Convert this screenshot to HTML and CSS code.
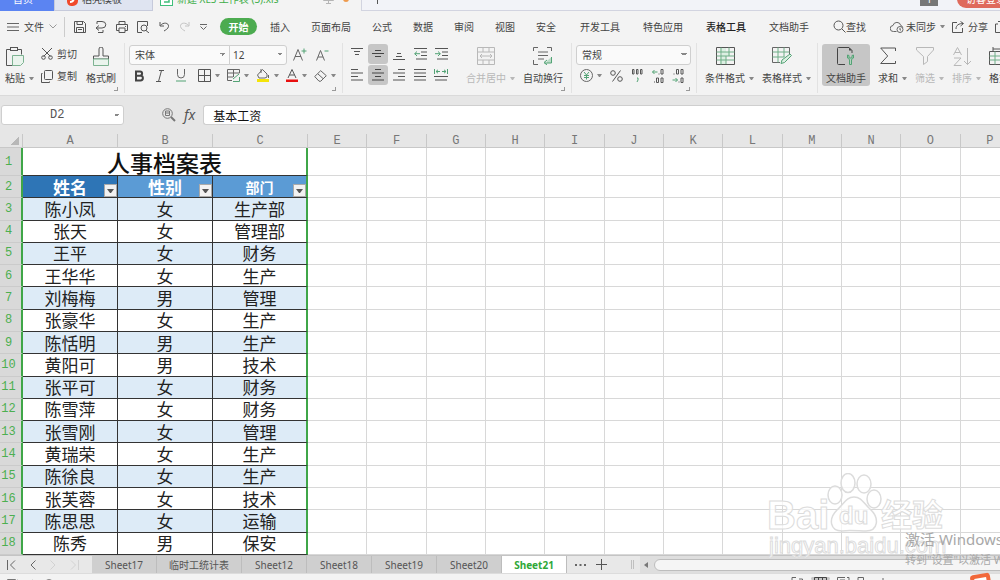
FILE: index.html
```html
<!DOCTYPE html>
<html lang="zh-CN">
<head>
    <meta charset="UTF-8">
    <title>新建 XLS 工作表 (3).xls</title>
    <meta name="viewport" content="width=device-width, initial-scale=1.0">
    <link rel="stylesheet" href="styles.css">
</head>
<body>
    <header class="titlebar">
        <button class="doc-tab home">首页</button>
        <button class="doc-tab docer">
            <svg width="12" height="14" viewBox="0 0 12 14"><path d="M1 1h6a5 5 0 0 1 5 5v3a5 5 0 0 1-5 5H5a5 5 0 0 1-4-5z" fill="#f0492c"/><path d="M4 10c3 0 4-2 4-5" stroke="#fff" stroke-width="2" fill="none"/></svg>
            稻壳模板
        </button>
        <button class="doc-tab current">
            <svg width="13" height="14" viewBox="0 0 13 14"><rect x=".5" y=".5" width="12" height="13" fill="#fff" stroke="#3fbf7a"/><path d="M9 4H4v3h5v3H4" stroke="#3fbf7a" stroke-width="1.5" fill="none"/></svg>
            <span>新建 XLS 工作表 (3).xls</span>
            <svg class="monitor" width="11" height="10" viewBox="0 0 11 10"><path d="M.5.5h10v6H.5zM5.500 7v2.500M3 9.500h5" stroke="#b5b5b5" fill="none"/></svg>
            <i class="unsaved"></i>
        </button>
        <button class="new-tab" aria-label="新建标签"><svg width="9" height="9" viewBox="0 0 9 9"><path d="M4.500 0v9M0 4.500h9" stroke="#555"/></svg></button>
        <span class="badge">1</span>
        <button class="login">访客登录</button>
    </header>

    <nav class="menubar">
        <button class="file-menu">
            <svg width="12" height="10" viewBox="0 0 12 10"><path d="M0 1.500h12M0 5h12M0 8.500h12" stroke="#666"/></svg>
            文件
            <svg width="8" height="5" viewBox="0 0 8 5"><path d="M.5.5 4 4 7.500.5" stroke="#999" fill="none"/></svg>
        </button>
        <div class="quick">
            <button aria-label="保存"><svg width="12" height="12" viewBox="0 0 12 12"><path d="M.5.5h9l2 2v9H.5zM3 .5v3h5.500v-3M2.500 11.500v-5h7v5M4 8.500h4" stroke="#555" fill="none"/></svg></button>
            <button aria-label="输出"><svg width="12" height="12" viewBox="0 0 12 12"><path d="M2 3V.5h5a3.500 3 0 0 1 0 6.500H1M4 4.500 1 7l3 2.500M3 11.500h5V9" stroke="#555" fill="none"/></svg></button>
            <button aria-label="打印"><svg width="12" height="12" viewBox="0 0 12 12"><path d="M3 3.500v-3h6v3M3 9.500H.5v-6h11v6H9M3 7h6v4.500H3zM9 5.500h1" stroke="#555" fill="none"/></svg></button>
            <button aria-label="打印预览"><svg width="13" height="12" viewBox="0 0 13 12"><path d="M5 11.500H.5V.5h10V5M9 9.500l3 2.500" stroke="#555" fill="none"/><circle cx="7" cy="7" r="3" stroke="#555" fill="none"/></svg></button>
            <button aria-label="撤销"><svg width="11" height="11" viewBox="0 0 11 11"><path d="M1 1v4h4M1.500 4.500C4 1 10 1.500 9.500 5.500 9 8 6.500 9 5 10" stroke="#555" fill="none"/></svg></button>
            <button aria-label="恢复"><svg width="11" height="11" viewBox="0 0 11 11"><path d="M10 1v4H6M9.500 4.500C7 1 1 1.500 1.500 5.500 2 8 4.500 9 6 10" stroke="#c4c4c4" fill="none"/></svg></button>
            <button aria-label="更多"><svg width="9" height="6" viewBox="0 0 9 6"><path d="M1 .5h7M1.500 2.500l3 3 3-3" stroke="#666" fill="none"/></svg></button>
        </div>
        <button class="active">开始</button>
        <div class="menus">
            <button>插入</button>
            <button>页面布局</button>
            <button>公式</button>
            <button>数据</button>
            <button>审阅</button>
            <button>视图</button>
            <button>安全</button>
        </div>
        <div class="menus wide">
            <button>开发工具</button>
            <button>特色应用</button>
            <button class="context">表格工具</button>
            <button>文档助手</button>
        </div>
        <button class="find"><svg width="13" height="13" viewBox="0 0 13 13"><circle cx="5.500" cy="5.500" r="4.500" stroke="#555" fill="none"/><path d="m9 9 3.500 3.500" stroke="#555"/></svg>查找</button>
        <button class="sync"><svg width="14" height="12" viewBox="0 0 14 12"><path d="M6.500 10.500H3.500a3 3 0 0 1-.5-6 4 4 0 0 1 7.800 0 3 3 0 0 1 2 2" stroke="#666" fill="none"/><circle cx="10" cy="8.500" r="3" stroke="#666" fill="none"/><path d="M10 7v2h1" stroke="#666" fill="none"/></svg>未同步<i class="caret"></i></button>
        <button class="share"><svg width="13" height="12" viewBox="0 0 13 12"><path d="M5 1.500H.5v10h10V7M4 8c0-4 3-5.500 7-5.500M8.500.5l3 2-3 2.500" stroke="#555" fill="none"/></svg>分享</button>
        <button class="share" aria-label="批注"><svg width="12" height="12" viewBox="0 0 12 12"><path d="M3 3H.5v8.500h10V8M3 .5h5M5.500 0v7" stroke="#555" fill="none"/></svg></button>
    </nav>

    <section class="ribbon">
        <div class="group clipboard">
            <button class="big"><svg width="18" height="20" viewBox="0 0 18 20"><path d="M4.500 2.500h-4v16h7M11.500 2.500h4v5" stroke="#555" fill="none"/><rect x="4.500" y=".5" width="7" height="3" stroke="#555" fill="none"/><path d="M6.500 8.500h11v7l-3 3h-8z" stroke="#7db392" fill="#eaf4ed"/></svg><span>粘贴<i class="caret"></i></span></button>
            <div class="rows">
                <button><svg width="12" height="12" viewBox="0 0 12 12"><path d="m1 0 8.500 8.500M11 0 2.500 8.500" stroke="#555"/><circle cx="2.500" cy="9.500" r="1.800" stroke="#555" fill="none"/><circle cx="9.500" cy="9.500" r="1.800" stroke="#555" fill="none"/></svg>剪切</button>
                <button><svg width="12" height="13" viewBox="0 0 12 13"><rect x="3.500" y=".5" width="8" height="9" rx="1" stroke="#555" fill="none"/><path d="M1.500 3.500h-1v9h8v-1" stroke="#555" fill="none"/></svg>复制</button>
            </div>
            <button class="big"><svg width="18" height="20" viewBox="0 0 18 20"><path d="M7 9V2a2 2 0 0 1 4 0v7h5.500v3h-15V9z" stroke="#555" fill="none"/><path d="M1.500 12h15v6.500h-15z" stroke="#7db392" fill="#eaf4ed"/></svg><span>格式刷</span></button>
            <i class="launcher"></i>
        </div>
        <div class="group font">
            <div class="line">
                <div class="joined">
                    <select class="combo font-name" aria-label="字体"><option>宋体</option></select>
                    <select class="combo font-size" aria-label="字号"><option>12</option></select>
                </div>
                <button aria-label="增大字号"><svg width="14" height="13" viewBox="0 0 14 13"><path d="m.5 12.500 4.500-11 4.500 11M2 8.500h6" stroke="#666" fill="none"/><path d="M11 .5v5M8.500 3h5" stroke="#53a375"/></svg></button>
                <button aria-label="减小字号"><svg width="13" height="12" viewBox="0 0 13 12"><path d="m.5 11.500 4-10 4 10M2 8h5" stroke="#666" fill="none"/><path d="M8.500 2h4" stroke="#53a375"/></svg></button>
            </div>
            <div class="line tools">
                <button aria-label="加粗"><svg width="10" height="12" viewBox="0 0 10 12"><path d="M2 1.500h4a2 2 0 0 1 0 4.200H2zm0 4.200h4.500a2.300 2.300 0 0 1 0 4.800H2z" stroke="#444" stroke-width="2" fill="none"/></svg></button>
                <button aria-label="倾斜"><svg width="8" height="12" viewBox="0 0 8 12"><path d="M3 .5h5M0 11.500h5M5.500.5l-3 11" stroke="#555"/></svg></button>
                <button aria-label="下划线"><svg width="10" height="13" viewBox="0 0 10 13"><path d="M1.500 0v5.500a3.500 3.500 0 0 0 7 0V0" stroke="#666" fill="none"/><path d="M0 12h10" stroke="#53a375"/></svg></button>
                <button aria-label="边框"><svg width="13" height="13" viewBox="0 0 13 13"><path d="M.5.5h12v12H.5zM6.500.5v12M.5 6.500h12" stroke="#555" fill="none"/></svg><i class="caret"></i></button>
                <button aria-label="单元格样式"><svg width="13" height="13" viewBox="0 0 13 13"><path d="M12.500 4V.5H.5v11H5M.5 4h12M.5 8H6M6.500.5V8" stroke="#666" fill="none"/><path d="m6 10 6-5M6 12.500h6.500V8" stroke="#53a375" fill="none"/></svg><i class="caret"></i></button>
                <button aria-label="填充颜色"><svg width="14" height="13" viewBox="0 0 14 13"><path d="M6.500.5 11 5v3L9 9H3L1.500 6z" stroke="#666" fill="none"/><path d="M5 0v4" stroke="#666"/><path d="M12.500 6v3" stroke="#666"/><path d="M1 10h12v3H1z" fill="#f4e409"/></svg><i class="caret"></i></button>
                <button aria-label="字体颜色"><svg width="12" height="13" viewBox="0 0 12 13"><path d="M2 9 6 .5 10 9M3.500 6h5" stroke="#555" fill="none"/><path d="M0 10.500h12V13H0z" fill="#e81010"/></svg><i class="caret"></i></button>
                <button aria-label="清除"><svg width="13" height="12" viewBox="0 0 13 12"><path d="m.7 6.500 6-5.800 5.600 5-5.500 5.500H5zM4 4l5 4.500" stroke="#666" fill="none"/></svg><i class="caret"></i></button>
            </div>
            <i class="launcher"></i>
        </div>
        <div class="group align">
            <div class="align-grid">
                <button aria-label="顶端对齐"><svg width="12" height="12" viewBox="0 0 12 12"><path d="M0 .5h12M3 3.500h6M4 6.500h4" stroke="#555"/></svg></button>
                <button class="on" aria-label="垂直居中"><svg width="12" height="12" viewBox="0 0 12 12"><path d="M3 2.500h6M0 5.500h12M3 8.500h6" stroke="#444"/></svg></button>
                <button aria-label="底端对齐"><svg width="12" height="12" viewBox="0 0 12 12"><path d="M4 5.500h4M3 8.500h6M0 11.500h12" stroke="#555"/></svg></button>
                <button aria-label="减少缩进"><svg width="13" height="12" viewBox="0 0 13 12"><path d="M0 .5h13M7 4h6M7 7.500h6M2 11h11" stroke="#555"/><path d="M6 5.700H.7M3 3.500.7 5.700 3 8" stroke="#53a375" fill="none"/></svg></button>
                <button aria-label="增加缩进"><svg width="13" height="12" viewBox="0 0 13 12"><path d="M0 .5h13M7 4h6M7 7.500h6M2 11h11" stroke="#555"/><path d="M0 5.700h5.300M3 3.500l2.300 2.200L3 8" stroke="#53a375" fill="none"/></svg></button>
                <button aria-label="左对齐"><svg width="12" height="12" viewBox="0 0 12 12"><path d="M0 .5h7M0 4h12M0 7.500h7M0 11h12" stroke="#555"/></svg></button>
                <button class="on" aria-label="水平居中"><svg width="12" height="12" viewBox="0 0 12 12"><path d="M3 .5h6M0 4h12M3 7.500h6M0 11h12" stroke="#444"/></svg></button>
                <button aria-label="右对齐"><svg width="12" height="12" viewBox="0 0 12 12"><path d="M5 .5h7M0 4h12M5 7.500h7M0 11h12" stroke="#555"/></svg></button>
                <button aria-label="两端对齐"><svg width="12" height="12" viewBox="0 0 12 12"><path d="M0 .5h12M0 4h12M0 7.500h12M0 11h12" stroke="#555"/></svg></button>
                <button aria-label="分散对齐"><svg width="14" height="12" viewBox="0 0 14 12"><path d="M.5 0v5M13.500 0v5M6 2.500H2M4 .8 2 2.500l2 1.700M8 2.500h4M10 .8l2 1.700-2 1.700" stroke="#53a375" fill="none"/><path d="M0 7.500h14M1 11h12" stroke="#555"/></svg></button>
            </div>
            <button class="big off"><svg width="18" height="18" viewBox="0 0 18 18"><path d="M.5.5h17v17H.5zM.5 5h17M.5 13h17M6 .5V5M12 .5V5M6 13v4.500M12 13v4.500M3 9h12M5 7 3 9l2 2M13 7l2 2-2 2" stroke="#b8b8b8" fill="none"/></svg><span>合并居中<i class="caret"></i></span></button>
            <button class="big"><svg width="20" height="18" viewBox="0 0 20 18"><path d="M.5 4V.5H5M14 .5h4.500V4M.5 13v4.500H5M5 5h10M5 8.500h10M5 12h6" stroke="#666" fill="none"/><path d="M18.500 10v6h-7M14 13l-3 2.500 3 2.500" stroke="#53a375" fill="#bcdcc8"/></svg><span>自动换行</span></button>
            <i class="launcher"></i>
        </div>
        <div class="group number">
            <div class="line"><select class="combo format" aria-label="数字格式"><option>常规</option></select></div>
            <div class="line tools">
                <button aria-label="货币"><svg width="13" height="13" viewBox="0 0 13 13"><circle cx="6.500" cy="6.500" r="6" stroke="#666" fill="none"/><path d="m4 3 2.500 3L9 3M6.500 6v4.500M4 6.500h5M4 8.500h5" stroke="#53a375" fill="none"/></svg><i class="caret"></i></button>
                <button aria-label="百分比"><svg width="13" height="12" viewBox="0 0 13 12"><circle cx="3" cy="3" r="2.300" stroke="#555" fill="none"/><circle cx="10" cy="9" r="2.300" stroke="#555" fill="none"/><path d="m10.500.5-8 11" stroke="#555"/></svg></button>
                <button aria-label="千位分隔"><svg width="13" height="14" viewBox="0 0 13 14"><path d="M1.500.5h1.500v4.500H1.500zM5.500.5H7v4.500H5.500zM9.500.5H11v4.500H9.500z" stroke="#555" fill="none"/><path d="M6 9h1v2l-1 2" stroke="#53a375" fill="none"/></svg></button>
                <button aria-label="增加小数"><svg width="12" height="14" viewBox="0 0 12 14"><path d="M9 .5h2v4.500H9zM4.500 9h2v4.500h-2zM9 9h2v4.500H9zM2 13h1M6.500 5h1" stroke="#555" fill="none"/><path d="M5.500 3h-5M2.500 1l-2 2 2 2" stroke="#53a375" fill="none"/></svg></button>
                <button aria-label="减少小数"><svg width="12" height="14" viewBox="0 0 12 14"><path d="M4.500.5h2v4.500h-2zM9 .5h2v4.500H9zM9 9h2v4.500H9zM1.500 5h1M6.500 13h1" stroke="#555" fill="none"/><path d="M.5 11h5M3.500 9l2 2-2 2" stroke="#53a375" fill="none"/></svg></button>
            </div>
            <i class="launcher"></i>
        </div>
        <div class="group styles">
            <button class="big"><svg width="19" height="18" viewBox="0 0 19 18"><path d="M4 1h6v4H4zM6 5h8v4H6zM4 9h6v8H4z" fill="#dcefe2"/><path d="M.5.5h18v17H.5z" stroke="#555" fill="none"/><path d="M.5 5h18M.5 9h18M.5 13h18M5 .5v17M13 .5V9M10 9v8" stroke="#6fae87" fill="none"/></svg><span>条件格式<i class="caret"></i></span></button>
            <button class="big"><svg width="20" height="18" viewBox="0 0 20 18"><path d="M17.500 7V.5H.5v15H8" stroke="#666" fill="none"/><path d="M.5 5h17M.5 10h12M6 .5v15M12 .5V10" stroke="#6fae87" fill="none"/><path d="m18 7 1.500 1.500-7 7-3.500 1 1-3.500z" stroke="#53a375" fill="#dcefe2"/></svg><span>表格样式<i class="caret"></i></span></button>
        </div>
        <div class="group edit">
            <button class="big on"><svg width="18" height="18" viewBox="0 0 18 18"><path d="M8 17.500H1.500a1 1 0 0 1-1-1v-15a1 1 0 0 1 1-1H12l3 3V6" stroke="#444" fill="none"/><path d="M12 .5v3h3z" fill="#444"/><path d="M10.500 8v3l2 1.500v5h2v-5l2-1.500V8l-1.500.5V11h-3V8.500z" stroke="#53a375" fill="#b2d3be"/></svg><span>文档助手</span></button>
            <button class="big"><svg width="16" height="18" viewBox="0 0 16 18"><path d="M15.500 4V1H.7l7 8-7 7.500h14.800V14" stroke="#555" fill="none"/></svg><span>求和<i class="caret"></i></span></button>
            <button class="big off"><svg width="18" height="18" viewBox="0 0 18 18"><path d="M.5.5h17V3L11.500 9.500v5l-4 3v-8L.5 3z" stroke="#b8b8b8" fill="none"/></svg><span>筛选<i class="caret"></i></span></button>
            <button class="big off"><svg width="19" height="19" viewBox="0 0 19 19"><path d="m.5 8 4-7.500 4 7.500M2 5.500h5M1 11h7l-7 7.500h7.500M14.500 1v16.500M11 14l3.500 3.500L18 14" stroke="#b8b8b8" fill="none"/></svg><span>排序<i class="caret"></i></span></button>
            <button class="big"><svg width="20" height="18" viewBox="0 0 20 18"><path d="M4 0v4M4 2h12" stroke="#555"/><path d="M.5 4.500h19v13H.5z" stroke="#555" fill="none"/><path d="M.5 9h19M.5 13h19M6 4.500v13M12 4.500v13" stroke="#6fae87"/></svg><span>格式<i class="caret"></i></span></button>
        </div>
    </section>

    <section class="formula-bar">
        <select class="combo name-box" aria-label="名称框"><option>D2</option></select>
        <button aria-label="浏览公式"><svg width="14" height="14" viewBox="0 0 14 14"><circle cx="5.500" cy="5.500" r="4.800" stroke="#777" fill="none"/><path d="M3.500 3h4v4.500h-4zM3.500 5h4" stroke="#777" fill="none"/><path d="m9 9 4 4" stroke="#777" stroke-width="2"/></svg></button>
        <button class="fx" aria-label="插入函数">fx</button>
        <input type="text" aria-label="编辑栏" value="基本工资">
    </section>

    <main class="sheet">
        <table>
            <colgroup id="cols"></colgroup>
            <thead><tr id="letters"></tr></thead>
            <tbody id="rows"></tbody>
        </table>
    </main>

    <footer>
        <div class="sheet-bar">
            <div class="nav">
                <button aria-label="第一张"><svg width="9" height="10" viewBox="0 0 9 10"><path d="M.5 0v10M8 .5 3.500 5 8 9.500" stroke="#666" fill="none"/></svg></button>
                <button aria-label="上一张"><svg width="6" height="10" viewBox="0 0 6 10"><path d="M5.500.5 1 5l4.500 4.500" stroke="#666" fill="none"/></svg></button>
                <button aria-label="下一张"><svg width="6" height="10" viewBox="0 0 6 10"><path d="M.5.5 5 5 .5 9.500" stroke="#d2d2d2" fill="none"/></svg></button>
                <button aria-label="最后一张"><svg width="9" height="10" viewBox="0 0 9 10"><path d="M8.500 0v10M1 .5 5.500 5 1 9.500" stroke="#d2d2d2" fill="none"/></svg></button>
            </div>
            <button class="sheet-tab">Sheet17</button>
            <button class="sheet-tab">临时工统计表</button>
            <button class="sheet-tab">Sheet12</button>
            <button class="sheet-tab">Sheet18</button>
            <button class="sheet-tab">Sheet19</button>
            <button class="sheet-tab">Sheet20</button>
            <button class="sheet-tab selected">Sheet21</button>
            <button class="more" aria-label="更多工作表"><svg width="11" height="2" viewBox="0 0 11 2"><path d="M0 0h2v2H0zM4.500 0h2v2h-2zM9 0h2v2H9z" fill="#666"/></svg></button>
            <button class="add" aria-label="新建工作表"><svg width="11" height="11" viewBox="0 0 11 11"><path d="M5.500 0v11M0 5.500h11" stroke="#555"/></svg></button>
            <i class="splitter"></i>
            <div class="scroll">
                <button aria-label="向左滚动"><svg width="4" height="6" viewBox="0 0 4 6"><path d="M4 0v6L0 3z" fill="#777"/></svg></button>
                <div class="thumb"></div>
            </div>
        </div>
        <div class="status">
            <svg width="12" height="10" viewBox="0 0 12 10"><path d="M.5 10V.5h8V5M7 3l4-2" stroke="#777" fill="none"/></svg>
            <i class="divider"></i>
            <svg width="10" height="10" viewBox="0 0 10 10"><circle cx="5" cy="5" r="4.500" stroke="#888" fill="none"/></svg>
            <div class="views">
                <svg width="13" height="10" viewBox="0 0 13 10"><path d="M5 .5H1V4M8 2h3.500V9" stroke="#666" fill="none"/></svg>
                <span class="view-on"><svg width="13" height="10" viewBox="0 0 13 10"><path d="M.5 10V.5h12V10M.5 4h12M4.500.5V10M8.500.5V10" stroke="#444" fill="none"/></svg></span>
                <svg width="13" height="10" viewBox="0 0 13 10"><path d="M.5 10V.5H8M3 3h5v7M10 .5h2V9" stroke="#666" fill="none"/></svg>
                <svg width="8" height="10" viewBox="0 0 8 10"><path d="M1 10V.5h5.500V5H2" stroke="#666" fill="none"/></svg>
                <svg width="16" height="10" viewBox="0 0 16 10"><path d="M2 4h5M11 1v8M14 3v6" stroke="#666"/></svg>
            </div>
        </div>
    </footer>

    <div class="watermark">
        <svg width="180" height="92" viewBox="0 0 180 92">
            <g fill="#fff" fill-opacity=".75" stroke="#dcdcdc" stroke-width="1.500">
                <ellipse cx="68" cy="22" rx="7" ry="9"/>
                <ellipse cx="81" cy="10" rx="7" ry="9.500"/>
                <ellipse cx="97" cy="11" rx="7" ry="9"/>
                <ellipse cx="107" cy="26" rx="7" ry="9"/>
                <path d="M87 24c8 0 10 7 16 12 10 9 8 22-4 22-6 0-18-1-24 0-12 0-14-12-5-21 7-6 9-13 17-13z"/>
            </g>
            <g class="mark-text">
                <text x="0" y="56" font-size="40">Bai</text>
                <text x="72" y="51" font-size="24">du</text>
                <text x="114" y="53" font-size="31">经验</text>
                <text class="mark-url" x="2" y="80" font-size="22">jingyan.baidu.com</text>
            </g>
        </svg>
    </div>
    <div class="activate">
        <p class="activate-title">激活 Windows</p>
        <p>转到"设置"以激活 Windows。</p>
    </div>
    <div class="ime"></div>
    <script src="sheet.js"></script>
</body>
</html>
```

FILE: styles.css
```css
html { box-sizing: border-box; }
*, *::before, *::after { box-sizing: inherit; }
body {
    margin: 0;
    height: 100vh;
    display: flex;
    flex-direction: column;
    overflow: hidden;
    position: relative;
    background: #f3f3f3;
    color: #444;
    font-family: 'Noto Sans', 'Noto Sans CJK SC', sans-serif;
    font-size: 10px;
    line-height: 14px;
}
button {
    display: flex;
    align-items: center;
    flex: none;
    padding: 0;
    border: none;
    background: none;
    color: inherit;
    font: inherit;
    white-space: nowrap;
}
svg { display: block; flex: none; }
p { margin: 0; }
.caret {
    flex: none;
    width: 5px;
    margin-left: 4px;
    border: 2px solid transparent;
    border-top: 3px solid #888;
    border-bottom: none;
}

/* document tabs, half hidden above the window edge */
.titlebar {
    flex: none;
    height: 11px;
    display: flex;
    align-items: flex-end;
    overflow: hidden;
    background: linear-gradient(#d2d4e0, #d2d4e0) bottom / 100% 1px no-repeat #f2f3f8;
}
.doc-tab { height: 24px; }
.home {
    width: 54px;
    padding-left: 13px;
    background: #5b84f2;
    color: #fff;
}
.docer {
    width: 99px;
    padding-left: 11px;
    gap: 4px;
    background: #dfe4f1;
    border: 1px solid #c6cadb;
}
.current {
    width: 209px;
    padding-left: 7px;
    gap: 4px;
    background: #f3f3f3;
    border-right: 1px solid #d2d4e0;
    color: #3fae49;
}
.monitor { margin-left: auto; }
.unsaved {
    width: 6px;
    height: 6px;
    margin: 0 12px 0 5px;
    border-radius: 50%;
    background: #ee9a4d;
}
.new-tab {
    height: 24px;
    margin-left: 11px;
}
.badge {
    margin: 0 19px 5px auto;
    width: 18px;
    height: 14px;
    background: #777;
    color: #fff;
    text-align: center;
}
.login {
    height: 18px;
    width: 68px;
    margin: 0 -25px 3px 0;
    padding-left: 9px;
    border-radius: 9px;
    background: #df6a5c;
    color: #fff;
}

.menubar {
    flex: none;
    height: 31px;
    display: flex;
    align-items: center;
    overflow: hidden;
}
.file-menu {
    padding: 0 7px;
    gap: 5px;
    height: 20px;
    border-right: 1px solid #ccc;
}
.quick {
    display: flex;
    align-items: center;
    gap: 9px;
    margin: 0 12px 0 9px;
}
.active {
    width: 37px;
    height: 17px;
    justify-content: center;
    border-radius: 9px;
    background: #4cab50;
    color: #fff;
    font-weight: 700;
}
.menus {
    display: flex;
    gap: 21px;
    margin-left: 13px;
}
.wide {
    gap: 23px;
    margin-left: 24px;
}
.context { font-weight: 500; color: #222; }
.find { margin-left: 24px; }
.sync { margin-left: 24px; gap: 2px; }
.sync .caret { margin-left: 2px; }
.share { margin-left: 7px; gap: 3px; }

.ribbon {
    flex: none;
    height: 54px;
    padding-top: 1px;
    display: flex;
    overflow: hidden;
    border-bottom: 1px solid #dadada;
}
.group {
    position: relative;
    flex: none;
    height: 50px;
    display: flex;
    align-items: flex-start;
    border-right: 1px solid #e2e2e2;
}
.launcher {
    position: absolute;
    right: 6px;
    bottom: 2px;
    width: 4px;
    height: 4px;
    border-right: 1px solid #999;
    border-bottom: 1px solid #999;
}
.big {
    flex-direction: column;
    height: 42px;
    margin-top: 1px;
    padding: 3px 0 1px;
    border-radius: 3px;
}
.big span {
    display: flex;
    align-items: center;
    margin-top: auto;
}
.big .caret { margin-right: -9px; }
.off { color: #b8b8b8; }
.off .caret { border-top-color: #b8b8b8; }
.on { background: #c6c6c6; }
.rows {
    display: flex;
    flex-direction: column;
    gap: 8px;
    padding-top: 4px;
}
.rows button { gap: 4px; }
.line {
    display: flex;
    align-items: center;
    height: 19px;
}
.tools { height: 13px; }
.combo {
    appearance: none;
    height: 20px;
    margin: 0;
    padding: 0 5px;
    border: 1px solid #cfcfcf;
    border-radius: 3px;
    background:
        linear-gradient(45deg, transparent 50%, #888 50%) right 6px center / 3px 3px no-repeat,
        linear-gradient(-45deg, transparent 50%, #888 50%) right 3px center / 3px 3px no-repeat;
    background-color: #fafafa;
    color: #444;
    font: inherit;
}
.clipboard {
    padding-left: 5px;
    width: 125px;
}
.clipboard .rows { margin: 0 9px 0 16px; }
.font {
    width: 218px;
    flex-direction: column;
    padding: 2px 0 0 4px;
    gap: 5px;
}
.joined { display: flex; margin-right: 6px; }
.font-name {
    width: 101px;
    border-radius: 3px 0 0 3px;
}
.font-size {
    width: 58px;
    margin-left: -1px;
    padding: 0 3px;
    border-radius: 0 3px 3px 0;
}
.font .line > button + button { margin-left: 9px; }
.font .tools { padding-left: 5px; }
.font .tools > button + button { margin-left: 12px; }
.font .tools > button:nth-child(n+5) { margin-left: 7px; }
.align { width: 229px; padding: 1px 0 0 4px; }
.align-grid {
    display: grid;
    grid-template-columns: repeat(5, 21px);
    grid-auto-rows: 20px;
    gap: 1px 0;
}
.align-grid button {
    width: 20px;
    justify-content: center;
    border-radius: 3px;
}
.align .big { margin-top: 0; margin-left: 14px; }
.align .big + .big { margin-left: 17px; }
.number {
    width: 125px;
    flex-direction: column;
    padding: 2px 0 0 4px;
    gap: 5px;
}
.format { width: 115px; }
.number .tools { padding-left: 4px; gap: 8px; }
.styles {
    width: 121px;
    padding-left: 8px;
    gap: 17px;
}
.edit {
    border: none;
    padding-left: 4px;
    gap: 17px;
}
.edit .big { min-width: 20px; }
.edit .on { padding: 3px 4px 1px; margin-right: -9px; }

.formula-bar {
    flex: none;
    display: flex;
    align-items: center;
    height: 38px;
    padding: 0 0 0 1px;
    background: #e6e6e6;
}
.name-box {
    width: 123px;
    margin-right: 38px;
    padding: 0 0 0 48px;
    background-color: #fff;
    color: #555;
    font: 12px/16px 'Liberation Mono', monospace;
}
.fx {
    margin: 0 8px;
    color: #555;
    font: italic 14px/16px 'Noto Sans', sans-serif;
}
.formula-bar input {
    flex: 1;
    min-width: 0;
    height: 20px;
    padding: 0 9px;
    border: 1px solid #cfcfcf;
    border-right: none;
    border-radius: 3px 0 0 3px;
    color: #111;
    font: 12px/16px 'Noto Sans CJK SC', sans-serif;
}

.sheet {
    flex: 1;
    min-height: 0;
    overflow: hidden;
    background: #fff;
}
table {
    width: 102%;
    height: 100%;
    table-layout: fixed;
    border-collapse: separate;
    border-spacing: 0;
}
th, td {
    padding: 0;
    overflow: hidden;
    white-space: nowrap;
    text-align: center;
    border-right: 1px solid #d8d8d8;
    border-bottom: 1px solid #d8d8d8;
}
.col-head { width: 23px; }
.col-data { width: 95px; }
thead th {
    height: 14px;
    background: #e6e6e6;
    border-color: #c8c8c8;
    color: #777;
    font: 12px/12px 'Liberation Mono', monospace;
}
thead th:first-child {
    background: linear-gradient(135deg, transparent 50%, #b8b8b8 50%) right 3px bottom 2px / 8px 8px no-repeat #e6e6e6;
}
tbody th {
    padding-right: 4px;
    background: #d9d9d9;
    border-right: 2px solid #3fa648;
    border-bottom-color: #cbcbcb;
    color: #4caf50;
    font: 12px/14px 'Liberation Mono', monospace;
}
.cell {
    position: relative;
    border-color: #333;
    color: #222;
    font: 17px/20px 'Noto Sans CJK SC', sans-serif;
}
.last { border-right: 2px solid #3fa648; }
.title {
    height: 28px;
    color: #111;
    font-size: 23px;
    line-height: 24px;
    font-weight: 500;
}
.banded { background: #ddebf7; }
.head {
    background: #5b9bd5;
    color: #fff;
    font-weight: 700;
}
.key { background: #2e75b6; }
.small { font-size: 14px; }
.filter {
    position: absolute;
    right: 0;
    bottom: 0;
    width: 13px;
    height: 13px;
    justify-content: center;
    border: 1px solid #aaa;
    background: #f2f2f2;
}
.filter .caret {
    width: 7px;
    margin: 0;
    border-width: 4px 3px 0;
    border-top-color: #555;
}

footer { flex: none; }
.sheet-bar {
    display: flex;
    height: 18px;
    background: #e8e8e8;
    border-top: 1px solid #c4c4c4;
    color: #555;
}
.nav {
    display: flex;
    width: 92px;
    padding-left: 7px;
    gap: 14px;
}
.sheet-tab {
    min-width: 65px;
    padding: 0 12px;
    justify-content: center;
    background: #cfcfcf;
    border-right: 1px solid #bdbdbd;
}
.selected {
    background: #fff;
    color: #2fa838;
    font-weight: 700;
}
.more { margin: 0 10px 0 8px; }
.splitter {
    width: 3px;
    margin: 4px 6px 4px 24px;
    border: 1px solid #c0c0c0;
    border-width: 0 1px;
}
.scroll {
    flex: 1;
    display: flex;
    align-items: center;
    background: #dedede;
}
.scroll button { margin: 0 6px 0 4px; }
.thumb {
    flex: 1;
    height: 12px;
    margin-right: -12px;
    border: 1px solid #bdbdbd;
    border-radius: 6px;
    background: #f5f5f5;
}
.status {
    display: flex;
    height: 7px;
    padding: 5px 0 0 7px;
    overflow: hidden;
    border-top: 1px solid #dcdcdc;
}
.divider {
    width: 1px;
    margin: 0 11px 0 13px;
    background: #ddd;
}
.views {
    display: flex;
    gap: 7px;
    margin: -2px 112px 0 auto;
}
.view-on {
    padding: 0 3px;
    border-radius: 3px;
    background: #c6c6c6;
}

/* overlays */
.watermark {
    position: absolute;
    right: 53px;
    bottom: 15px;
    pointer-events: none;
}
.mark-text {
    fill: #fff;
    fill-opacity: .75;
    stroke: #dcdcdc;
    stroke-width: 1;
    font-family: 'Liberation Sans', 'Noto Sans CJK SC', sans-serif;
    font-weight: 700;
}
.mark-url { font-weight: 400; }
.activate {
    position: absolute;
    left: calc(100% - 95px);
    bottom: 12px;
    color: #a8a8a8;
    font-size: 11px;
    line-height: 17px;
    white-space: nowrap;
}
.activate-title { font-size: 15px; line-height: 24px; }
.ime {
    position: absolute;
    right: 9px;
    bottom: -12px;
    width: 20px;
    height: 18px;
    border: 4px solid #f2683a;
    border-radius: 3px;
    background: #fff;
    transform: rotate(-10deg);
}
```

FILE: sheet.js
```js
const letters = ["A", "B", "C", "E", "F", "G", "H", "I", "J", "K", "L", "M", "N", "O", "P"];
const people = [
    ["陈小凤", "女", "生产部"],
    ["张天", "女", "管理部"],
    ["王平", "女", "财务"],
    ["王华华", "女", "生产"],
    ["刘梅梅", "男", "管理"],
    ["张豪华", "女", "生产"],
    ["陈恬明", "男", "生产"],
    ["黄阳可", "男", "技术"],
    ["张平可", "女", "财务"],
    ["陈雪萍", "女", "财务"],
    ["张雪刚", "女", "管理"],
    ["黄瑞荣", "女", "生产"],
    ["陈徐良", "女", "生产"],
    ["张芙蓉", "女", "技术"],
    ["陈思思", "女", "运输"],
    ["陈秀", "男", "保安"]
];
const blanks = "<td></td>".repeat(12);
const filter = '<button class="filter" aria-label="筛选"><i class="caret"></i></button>';

document.getElementById("cols").innerHTML =
    '<col class="col-head">' + '<col class="col-data">'.repeat(3) + "<col>".repeat(12);
document.getElementById("letters").innerHTML =
    "<th></th>" + letters.map(l => `<th>${l}</th>`).join("");

let html = `<tr><th>1</th><td class="cell title last" colspan="3">人事档案表</td>${blanks}</tr>`;
html += `<tr><th>2</th><td class="cell head key">姓名${filter}</td><td class="cell head">性别${filter}</td>`;
html += `<td class="cell head small last">部门${filter}</td>${blanks}</tr>`;
people.forEach((p, i) => {
    const band = i % 2 === 0 ? " banded" : "";
    html += `<tr><th>${i + 3}</th>`;
    p.forEach((v, c) => {
        html += `<td class="cell${band}${c === 2 ? " last" : ""}">${v}</td>`;
    });
    html += blanks + "</tr>";
});
document.getElementById("rows").innerHTML = html;
```
